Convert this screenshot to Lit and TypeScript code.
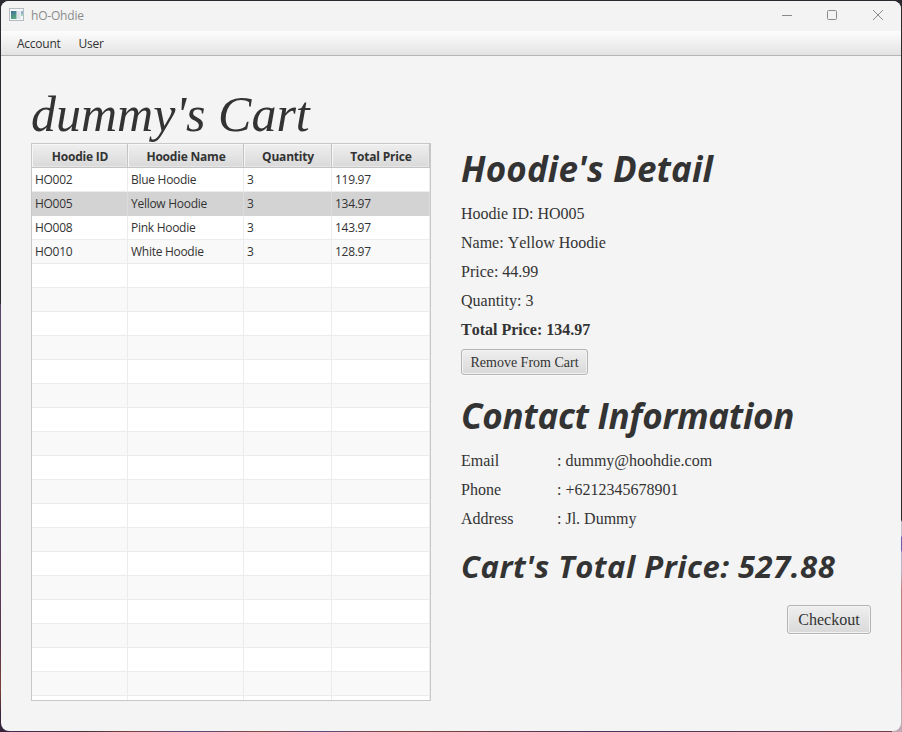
import { LitElement, html, css, svg } from "lit";
import { customElement } from "lit/decorators.js";
import { classMap } from "lit/directives/class-map.js";

interface CartItem {
  id: string;
  name: string;
  quantity: number;
  total: string;
}

const ITEMS: CartItem[] = [
  { id: "HO002", name: "Blue Hoodie", quantity: 3, total: "119.97" },
  { id: "HO005", name: "Yellow Hoodie", quantity: 3, total: "134.97" },
  { id: "HO008", name: "Pink Hoodie", quantity: 3, total: "143.97" },
  { id: "HO010", name: "White Hoodie", quantity: 3, total: "128.97" },
];
const SELECTED = "HO005";
const VISIBLE_ROWS = 23;

@customElement("title-bar")
export class TitleBar extends LitElement {
  static styles = css`
    :host {
      display: flex;
      align-items: center;
      height: 30px;
      background: #f3f3f3;
      color: #8c8c8c;
      font: 12px/16px "Open Sans", "Noto Sans", sans-serif;
    }
    .icon { display: block; margin: 0 0 3px 8px; }
    .name { flex: 1; margin-left: 7px; letter-spacing: -0.2px; }
    .controls { display: block; margin: 0 16px 2px 0; }
  `;
  render() {
    return html`
      <svg class="icon" width="15" height="13" viewBox="0 0 15 13">
        <defs>
          <linearGradient id="pane" x1="0" y1="0" x2="0.4" y2="1">
            <stop offset="0" stop-color="#3f6f9c" />
            <stop offset="1" stop-color="#5aa67c" />
          </linearGradient>
        </defs>
        <rect x="0.5" y="0.5" width="14" height="12" fill="#f4f6f8" stroke="#b4bcc4" />
        <rect x="2" y="3" width="5.5" height="8" fill="url(#pane)" />
        <rect x="8" y="3" width="3.5" height="8" fill="#dfe2ea" />
        <rect x="12" y="3" width="2" height="3" fill="#8fb4d0" />
        <rect x="12" y="6" width="2" height="2" fill="#a8d4bc" />
      </svg>
      <span class="name">hO-Ohdie</span>
      <svg class="controls" width="104" height="12" viewBox="0 0 104 12" fill="none" stroke="#8a8a8a">
        ${svg`
          <path d="M1 6.5H11" />
          <rect x="46.5" y="1.5" width="9" height="9" rx="1" />
          <path d="M92 1L102 11M102 1L92 11" />
        `}
      </svg>
    `;
  }
}

@customElement("menu-strip")
export class MenuStrip extends LitElement {
  static styles = css`
    :host {
      display: flex;
      gap: 18px;
      box-sizing: border-box;
      height: 25px;
      padding: 0 16px;
      border-bottom: 1px solid #b5b5b5;
      background: linear-gradient(#fdfdfd, #e3e3e3);
      color: #333;
      font: 12px/26px "Open Sans", "Noto Sans", sans-serif;
      letter-spacing: -0.25px;
    }
  `;
  render() {
    return html`<span>Account</span><span>User</span>`;
  }
}

@customElement("cart-table")
export class CartTable extends LitElement {
  static styles = css`
    :host {
      display: block;
      box-sizing: border-box;
      width: 400px;
      height: 558px;
      overflow: hidden;
      border: 1px solid #c8c8c8;
      background: #fff;
      color: #333;
      font: 12px/24px "Open Sans", "Noto Sans", sans-serif;
    }
    .row {
      display: grid;
      grid-template-columns: 96px 116px 88px 98px;
      height: 24px;
      background: #fff;
    }
    .row.odd { background: #f9f9f9; }
    .row.selected { background: #d3d3d3; }
    .cell {
      box-sizing: border-box;
      height: 24px;
      padding-left: 3px;
      border-right: 1px solid #ececec;
      border-bottom: 1px solid #ececec;
      letter-spacing: -0.28px;
      white-space: nowrap;
    }
    .selected .cell { border-color: #dcdcdc #dcdcdc #d3d3d3; }
    .head {
      display: grid;
      grid-template-columns: 96px 116px 88px 98px;
      height: 24px;
    }
    .title {
      box-sizing: border-box;
      height: 24px;
      padding-left: 1px;
      border-right: 1px solid #c4c4c4;
      border-bottom: 1px solid #c4c4c4;
      background: linear-gradient(#efefef, #d9d9d9);
      box-shadow: inset 1px 1px #f6f6f6, inset -1px -1px #e6e6e6;
      text-align: center;
      font-weight: 700;
      line-height: 25px;
      letter-spacing: -0.2px;
      white-space: nowrap;
    }
  `;
  render() {
    const rows = Array.from({ length: VISIBLE_ROWS }, (_, i) => ITEMS[i]);
    return html`
      <div class="head">
        ${["Hoodie ID", "Hoodie Name", "Quantity", "Total Price"].map(
          (t) => html`<div class="title">${t}</div>`
        )}
      </div>
      ${rows.map(
        (r, i) => html`
          <div class=${classMap({ row: true, odd: i % 2 === 1, selected: r?.id === SELECTED })}>
            <div class="cell">${r?.id}</div>
            <div class="cell">${r?.name}</div>
            <div class="cell">${r?.quantity}</div>
            <div class="cell">${r?.total}</div>
          </div>
        `
      )}
    `;
  }
}

@customElement("app-root")
export class AppRoot extends LitElement {
  static styles = css`
    :host {
      display: block;
      box-sizing: border-box;
      width: 902px;
      height: 732px;
      padding: 1px;
      background:
        linear-gradient(#2b2930 0 520px, #c9c2d0 522px 536px, #6f58b0 537px 550px, #b9b2cc 553px 571px, #c08080 590px 660px, #c0a8b4 700px) right / 10px 100% no-repeat,
        linear-gradient(#2b2930 0 303px, #5a4668 305px 500px, #58354c 640px, #7a4038 690px, #35243c 715px) left / 10px 100% no-repeat,
        linear-gradient(90deg, #3c2850, #46343c 90px, #7a4044 130px, #54487c 190px, #804c44 260px, #5c4c7c 320px, #80483c 400px, #48345c 600px, #70404c 892px) bottom / 100% 10px no-repeat,
        #2b2930;
      color: #333;
      font: 16px/19px "Liberation Serif", serif;
    }
    .window {
      display: flex;
      flex-direction: column;
      height: 730px;
      overflow: hidden;
      border-radius: 8px;
      background: #f4f4f4;
    }
    .content {
      display: grid;
      grid-template-columns: 400px 410px;
      column-gap: 30px;
      padding: 30px 30px 0;
      font-kerning: none;
    }
    .cart-name {
      margin: 0;
      height: 57px;
      font: italic 400 50px/57px "Liberation Serif", serif;
      font-kerning: none;
      white-space: nowrap;
    }
    .side { display: flex; flex-direction: column; align-items: flex-start; padding-top: 57px; }
    h2 {
      margin: 0;
      height: 48px;
      font: italic 700 35px/51px "Open Sans", "Noto Sans", sans-serif;
      font-kerning: none;
      white-space: nowrap;
    }
    .detail { letter-spacing: 0.15px; }
    .line { height: 19px; margin-top: 10px; white-space: nowrap; }
    .detail + .line, .contact + .line { margin-top: 13px; }
    .strong { font-weight: 700; }
    .contact { margin-top: 15px; letter-spacing: -0.25px; }
    .total { margin-top: 16px; height: 43px; font-size: 31px; line-height: 45px; letter-spacing: 0.5px; }
    .pair { display: grid; grid-template-columns: 96px auto; }
    .button {
      box-sizing: border-box;
      border: 1px solid #b4b4b4;
      border-radius: 3px;
      background: linear-gradient(#efefef, #d9d9d9);
      box-shadow: inset 0 0 0 1px #f3f3f3, 0 1px #fafafa;
      color: #333;
      padding: 0;
      text-align: center;
      white-space: nowrap;
      font-family: "Liberation Serif", serif;
    }
    .remove { width: 127px; height: 26px; margin-top: 10px; font-size: 14px; line-height: 25px; }
    .checkout { width: 84px; height: 29px; align-self: flex-end; margin-top: 18px; font-size: 16px; line-height: 28px; }
  `;
  render() {
    return html`
      <div class="window">
        <title-bar></title-bar>
        <menu-strip></menu-strip>
        <main class="content">
          <section>
            <h1 class="cart-name">dummy's Cart</h1>
            <cart-table></cart-table>
          </section>
          <section class="side">
            <h2 class="detail">Hoodie's Detail</h2>
            <div class="line">Hoodie ID: HO005</div>
            <div class="line">Name: Yellow Hoodie</div>
            <div class="line">Price: 44.99</div>
            <div class="line">Quantity: 3</div>
            <div class="line strong">Total Price: 134.97</div>
            <button class="button remove">Remove From Cart</button>
            <h2 class="contact">Contact Information</h2>
            <div class="line pair"><span>Email</span><span>: dummy@hoohdie.com</span></div>
            <div class="line pair"><span>Phone</span><span>: +6212345678901</span></div>
            <div class="line pair"><span>Address</span><span>: Jl. Dummy</span></div>
            <h2 class="total">Cart's Total Price: 527.88</h2>
            <button class="button checkout">Checkout</button>
          </section>
        </main>
      </div>
    `;
  }
}
